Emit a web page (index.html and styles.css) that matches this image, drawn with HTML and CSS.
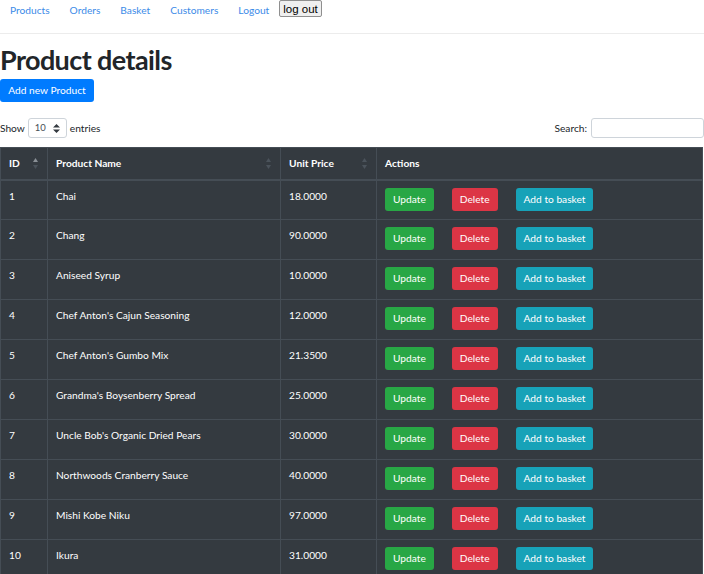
FILE: index.html
```html
<!DOCTYPE html>
<html lang="en">
<head>
<meta charset="utf-8">
<title>Product details</title>
<link rel="stylesheet" href="styles.css">
</head>
<body>
<nav class="topnav">
  <a class="navlink" href="#">Products</a>
  <a class="navlink" href="#">Orders</a>
  <a class="navlink" href="#">Basket</a>
  <a class="navlink" href="#">Customers</a>
  <a class="navlink" href="#">Logout</a>
  <button class="logout" type="button">log out</button>
</nav>
<main class="page">
  <h1 class="title">Product details</h1>
  <button class="btn btn-primary add-btn" type="button">Add new Product</button>
  <div class="controls">
    <label class="length">Show
      <span class="select">10
        <svg class="select-arrows" width="7" height="9" viewBox="0 0 7 9"><path d="M3.5 0L7 3.5H0z M3.5 9L0 5.5H7z" fill="#343a40"/></svg>
      </span>
      entries</label>
    <label class="search">Search: <span class="search-input"></span></label>
  </div>
  <table class="grid">
    <thead>
      <tr>
        <th class="c-id"><span class="th-inner">ID<svg class="sort" width="5" height="11" viewBox="0 0 5 11"><path d="M2.5 0L5 4H0z" fill="#8a9096"/><path d="M2.5 11L0 7H5z" fill="#4b535b"/></svg></span></th>
        <th class="c-name"><span class="th-inner">Product Name<svg class="sort" width="5" height="11" viewBox="0 0 5 11"><path d="M2.5 0L5 4H0z" fill="#4b535b"/><path d="M2.5 11L0 7H5z" fill="#4b535b"/></svg></span></th>
        <th class="c-price"><span class="th-inner">Unit Price<svg class="sort" width="5" height="11" viewBox="0 0 5 11"><path d="M2.5 0L5 4H0z" fill="#4b535b"/><path d="M2.5 11L0 7H5z" fill="#4b535b"/></svg></span></th>
        <th class="c-act">Actions</th>
      </tr>
    </thead>
    <tbody>
      <tr><td>1</td><td>Chai</td><td>18.0000</td><td><div class="acts"><span class="btn btn-green">Update</span><span class="btn btn-red">Delete</span><span class="btn btn-teal">Add to basket</span></div></td></tr>
      <tr><td>2</td><td>Chang</td><td>90.0000</td><td><div class="acts"><span class="btn btn-green">Update</span><span class="btn btn-red">Delete</span><span class="btn btn-teal">Add to basket</span></div></td></tr>
      <tr><td>3</td><td>Aniseed Syrup</td><td>10.0000</td><td><div class="acts"><span class="btn btn-green">Update</span><span class="btn btn-red">Delete</span><span class="btn btn-teal">Add to basket</span></div></td></tr>
      <tr><td>4</td><td>Chef Anton's Cajun Seasoning</td><td>12.0000</td><td><div class="acts"><span class="btn btn-green">Update</span><span class="btn btn-red">Delete</span><span class="btn btn-teal">Add to basket</span></div></td></tr>
      <tr><td>5</td><td>Chef Anton's Gumbo Mix</td><td>21.3500</td><td><div class="acts"><span class="btn btn-green">Update</span><span class="btn btn-red">Delete</span><span class="btn btn-teal">Add to basket</span></div></td></tr>
      <tr><td>6</td><td>Grandma's Boysenberry Spread</td><td>25.0000</td><td><div class="acts"><span class="btn btn-green">Update</span><span class="btn btn-red">Delete</span><span class="btn btn-teal">Add to basket</span></div></td></tr>
      <tr><td>7</td><td>Uncle Bob's Organic Dried Pears</td><td>30.0000</td><td><div class="acts"><span class="btn btn-green">Update</span><span class="btn btn-red">Delete</span><span class="btn btn-teal">Add to basket</span></div></td></tr>
      <tr><td>8</td><td>Northwoods Cranberry Sauce</td><td>40.0000</td><td><div class="acts"><span class="btn btn-green">Update</span><span class="btn btn-red">Delete</span><span class="btn btn-teal">Add to basket</span></div></td></tr>
      <tr><td>9</td><td>Mishi Kobe Niku</td><td>97.0000</td><td><div class="acts"><span class="btn btn-green">Update</span><span class="btn btn-red">Delete</span><span class="btn btn-teal">Add to basket</span></div></td></tr>
      <tr><td>10</td><td>Ikura</td><td>31.0000</td><td><div class="acts"><span class="btn btn-green">Update</span><span class="btn btn-red">Delete</span><span class="btn btn-teal">Add to basket</span></div></td></tr>
    </tbody>
  </table>
</main>
</body>
</html>
```
FILE: styles.css
```css
* { box-sizing: border-box; }
body {
  margin: 0;
  font-family: Lato, "Open Sans", sans-serif;
  font-size: 10.2px;
  line-height: 16px;
  color: #212529;
  background: #fff;
}
.topnav {
  display: flex;
  align-items: flex-start;
  height: 34px;
  border-bottom: 1px solid #ececec;
}
.navlink {
  color: #3c8be8;
  text-decoration: none;
  padding: 2px 10px 0 10px;
}
.logout {
  margin: 0;
  height: 17px;
  padding: 0 3px;
  font-family: "Liberation Sans", Arial, sans-serif;
  font-size: 11.5px;
  line-height: 14px;
  color: #000;
  background: #efefef;
  border: 1px solid #8f8f8f;
  border-radius: 2px;
}
.page { padding: 0; }
.title {
  margin: 10px 0 3px;
  font-size: 27px;
  line-height: 32px;
  font-weight: 700;
  letter-spacing: -0.6px;
  color: #212529;
}
.btn {
  display: inline-block;
  color: #fff;
  border-radius: 3px;
  padding: 3px 8px;
  height: 23px;
  line-height: 17px;
  border: 0;
  font-family: inherit;
  font-size: 10.2px;
  white-space: nowrap;
}
.btn-primary { background: #007bff; }
.add-btn { width: 94px; padding: 3px 0; text-align: center; }
.controls {
  display: flex;
  justify-content: space-between;
  align-items: center;
  margin-top: 16px;
  height: 20px;
}
.length { display: flex; align-items: center; gap: 3px; color: #212529; }
.select {
  display: inline-flex;
  align-items: center;
  justify-content: space-between;
  width: 39px;
  height: 20px;
  padding: 0 6px 0 6px;
  border: 1px solid #ced4da;
  border-radius: 3px;
  font-size: 9.5px;
  color: #495057;
}
.search { display: flex; align-items: center; gap: 4px; }
.search-input {
  display: inline-block;
  width: 113px;
  height: 20px;
  border: 1px solid #ced4da;
  border-radius: 3px;
}
.grid {
  margin-top: 9px;
  width: 703px;
  border-collapse: collapse;
  background: #343a40;
  color: #fff;
  border-right: 1px solid #c6c8ca;
}
.grid th, .grid td {
  border: 1px solid #454d55;
  padding: 8px 8px;
  text-align: left;
  vertical-align: top;
}
.grid th {
  font-weight: 700;
  height: 32px;
  border-bottom-width: 2px;
  padding: 7px 8px;
}
.th-inner { display: flex; justify-content: space-between; align-items: center; }
.sort { display: block; margin-right: 1px; }
.c-id { width: 47px; }
.c-name { width: 233px; }
.c-price { width: 96px; }
.grid td { height: 40px; padding: 7px 8px 8px; }
.acts { display: flex; gap: 18px; }
.btn-green { background: #28a745; }
.btn-red { background: #dc3545; }
.btn-teal { background: #17a2b8; }
```
